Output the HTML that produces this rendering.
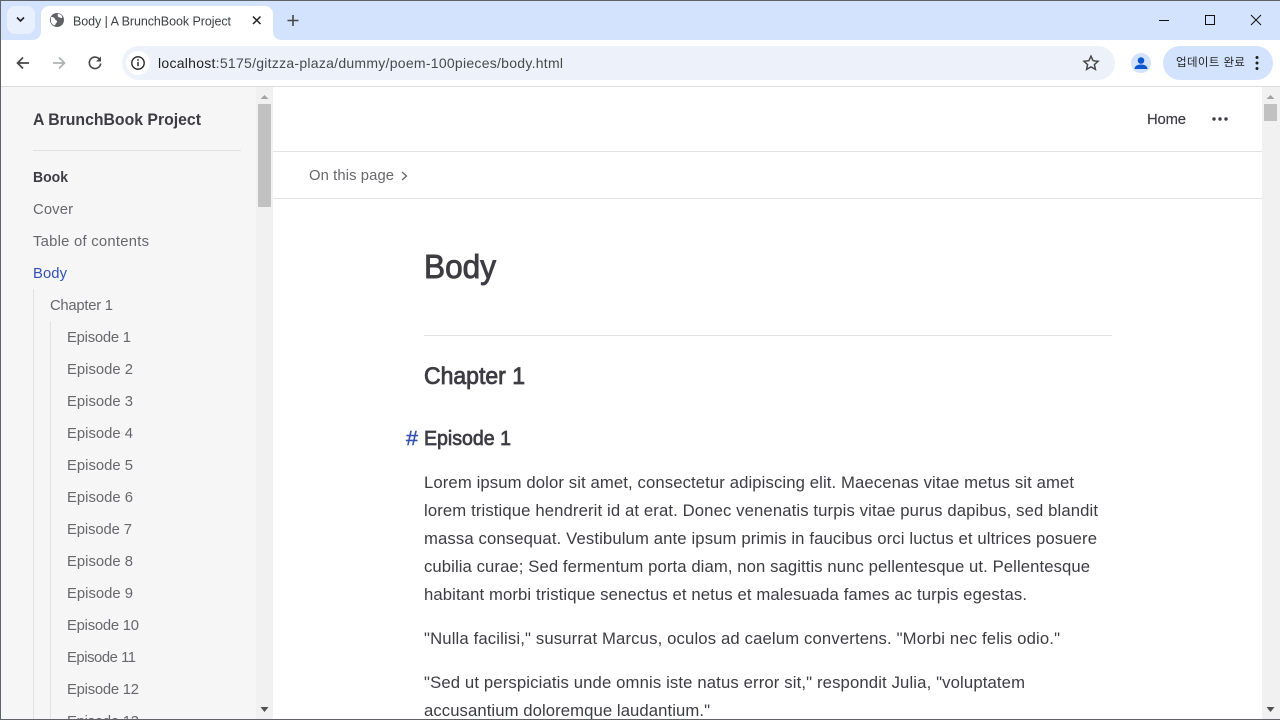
<!DOCTYPE html>
<html lang="en">
<head>
<meta charset="utf-8">
<title>Body | A BrunchBook Project</title>
<style>
html,body{margin:0;padding:0;width:1280px;height:720px;overflow:hidden;background:#fff}
svg{position:absolute;left:0;top:0;display:block}
text{font-family:"Liberation Sans","Noto Sans CJK KR",sans-serif;white-space:pre}
.s{font-size:14.800px;fill:#67676c}
.b{font-size:16.700px;fill:#3c3c43}
</style>
</head>
<body>
<svg width="1280" height="720" viewBox="0 0 1280 720" xmlns="http://www.w3.org/2000/svg">
<defs><clipPath id="c"><rect x="0" y="87" width="1280" height="632"/></clipPath></defs>
<rect width="1280" height="720" fill="#fff"/>
<!-- tab strip -->
<rect width="1280" height="40" fill="#d3e3fd"/>
<rect x="7" y="6" width="28" height="28" rx="8" fill="#e8f0fe"/>
<path d="M17 17.500l3.500 3.500 3.500-3.500" fill="none" stroke="#1f1f1f" stroke-width="1.600"/>
<path d="M33 40a8 8 0 0 0 8-8V14a8 8 0 0 1 8-8h216a8 8 0 0 1 8 8v18a8 8 0 0 0 8 8z" fill="#fff"/>
<circle cx="57" cy="20" r="7" fill="#5f6368"/>
<path d="M51 17c2 0 3.500 .5 4 2s2 1 2 2.500-1.500 1.500-1.500 3l-1 1c-1.500-.5-3-2-3.500-3.500zM58 13.500c1 1 3 .5 3.500 2 .5 1 1 2 .5 2.500-1 0-2.500-.5-3.500-1-1-.5-1-2-.5-3.500z" fill="#fff"/>
<text x="73" y="25.500" font-size="12.500" fill="#3c4043" textLength="158" lengthAdjust="spacing">Body | A BrunchBook Project</text>
<path d="M253 16.500l7.500 7.500M260.500 16.500l-7.500 7.500" stroke="#1f1f1f" stroke-width="1.500" fill="none"/>
<path d="M293 15v11M287.500 20.500h11" stroke="#474747" stroke-width="1.600" fill="none"/>
<path d="M1159 20.500h10" stroke="#111" stroke-width="1"/>
<rect x="1205.500" y="15.500" width="9" height="9" fill="none" stroke="#111" stroke-width="1"/>
<path d="M1251 15l10 10M1261 15l-10 10" stroke="#111" stroke-width="1" fill="none"/>
<!-- toolbar -->
<path d="M0 86V48a8 8 0 0 1 8-8h1264a8 8 0 0 1 8 8v38z" fill="#fff"/>
<path d="M33 40a8 8 0 0 0 8-8h232a8 8 0 0 0 8 8z" fill="#fff"/>
<rect x="0" y="86" width="1280" height="1" fill="#dadce0"/>
<path d="M29 63H18M23 57.500L17.500 63l5.500 5.500" fill="none" stroke="#474747" stroke-width="1.700"/>
<path d="M53 63h11M59 57.500l5.500 5.500-5.500 5.500" fill="none" stroke="#b0b2b5" stroke-width="1.700"/>
<path d="M100 60a5.700 5.700 0 1 0 .7 3.500" fill="none" stroke="#474747" stroke-width="1.600"/>
<path d="M101 56.500v5h-5z" fill="#474747"/>
<rect x="122" y="46" width="993" height="34" rx="17" fill="#edf2fa"/>
<circle cx="138" cy="63" r="12" fill="#fff"/>
<circle cx="138" cy="63" r="6.200" fill="none" stroke="#1f1f1f" stroke-width="1.300"/>
<path d="M138 62v4.200" stroke="#1f1f1f" stroke-width="1.400"/><circle cx="138" cy="60" r=".9" fill="#1f1f1f"/>
<text x="158" y="68" font-size="14" textLength="405" lengthAdjust="spacing"><tspan fill="#1f1f1f">localhost</tspan><tspan fill="#474a4d">:5175/gitzza-plaza/dummy/poem-100pieces/body.html</tspan></text>
<path d="M1091 56.200l2.100 4.500 4.900.6-3.600 3.300 1 4.800-4.400-2.500-4.400 2.500 1-4.800-3.600-3.300 4.900-.6z" fill="none" stroke="#474747" stroke-width="1.500"/>
<circle cx="1141" cy="63" r="10" fill="#d3e3fd"/>
<circle cx="1141" cy="60.500" r="3.300" fill="#0b57d0"/>
<path d="M1134.500 69c0-3 3-4.500 6.500-4.500s6.500 1.500 6.500 4.500z" fill="#0b57d0"/>
<rect x="1163" y="46" width="110" height="34" rx="17" fill="#d3e3fd"/>
<text x="1176" y="66" font-size="11.500" fill="#1f1f1f" textLength="69" lengthAdjust="spacing">업데이트 완료</text>
<circle cx="1257" cy="57.500" r="1.500" fill="#1f1f1f"/><circle cx="1257" cy="63" r="1.500" fill="#1f1f1f"/><circle cx="1257" cy="68.500" r="1.500" fill="#1f1f1f"/>
<!-- page -->
<g clip-path="url(#c)">
<rect x="0" y="87" width="273" height="633" fill="#f6f6f7"/>
<rect x="33" y="150" width="208" height="1" fill="#e2e2e3"/>
<text x="33" y="125" font-size="16.500" font-weight="700" fill="#3c3c43" textLength="168" lengthAdjust="spacingAndGlyphs">A BrunchBook Project</text>
<text x="33" y="182" font-size="14.500" font-weight="700" fill="#3c3c43" textLength="35" lengthAdjust="spacingAndGlyphs">Book</text>
<text x="33" y="214" class="s" textLength="40" lengthAdjust="spacing">Cover</text>
<text x="33" y="246" class="s" textLength="116" lengthAdjust="spacing">Table of contents</text>
<text x="33" y="278" class="s" style="fill:#3451b2" textLength="34" lengthAdjust="spacing">Body</text>
<rect x="33" y="289" width="1" height="431" fill="#e2e2e3"/>
<rect x="50" y="321" width="1" height="399" fill="#e2e2e3"/>
<text x="50" y="310" class="s" textLength="63" lengthAdjust="spacing">Chapter 1</text>
<text x="67" y="342" class="s" textLength="64" lengthAdjust="spacing">Episode 1</text>
<text x="67" y="374" class="s" textLength="66" lengthAdjust="spacing">Episode 2</text>
<text x="67" y="406" class="s" textLength="66" lengthAdjust="spacing">Episode 3</text>
<text x="67" y="438" class="s" textLength="66" lengthAdjust="spacing">Episode 4</text>
<text x="67" y="470" class="s" textLength="66" lengthAdjust="spacing">Episode 5</text>
<text x="67" y="502" class="s" textLength="66" lengthAdjust="spacing">Episode 6</text>
<text x="67" y="534" class="s" textLength="65" lengthAdjust="spacing">Episode 7</text>
<text x="67" y="566" class="s" textLength="66" lengthAdjust="spacing">Episode 8</text>
<text x="67" y="598" class="s" textLength="66" lengthAdjust="spacing">Episode 9</text>
<text x="67" y="630" class="s" textLength="72" lengthAdjust="spacing">Episode 10</text>
<text x="67" y="662" class="s" textLength="69" lengthAdjust="spacing">Episode 11</text>
<text x="67" y="694" class="s" textLength="72" lengthAdjust="spacing">Episode 12</text>
<text x="67" y="726" class="s" textLength="72" lengthAdjust="spacing">Episode 13</text>
<!-- sidebar scrollbar -->
<rect x="256" y="87" width="17" height="633" fill="#f1f1f1"/>
<rect x="258" y="104" width="13" height="103" fill="#c1c1c1"/>
<path d="M260.500 99l4-4 4 4z" fill="#a3a3a3"/>
<path d="M260.500 707l4 5 4-5z" fill="#505050"/>
<!-- top nav -->
<rect x="273" y="151" width="990" height="1" fill="#e2e2e3"/>
<rect x="273" y="198" width="990" height="1" fill="#e2e2e3"/>
<text x="1147" y="124" font-size="14.800" fill="#3c3c43" stroke="#3c3c43" stroke-width=".2" textLength="39" lengthAdjust="spacing">Home</text>
<circle cx="1214" cy="119" r="1.700" fill="#3c3c43"/><circle cx="1220" cy="119" r="1.700" fill="#3c3c43"/><circle cx="1226" cy="119" r="1.700" fill="#3c3c43"/>
<text x="309" y="180" class="s" textLength="85" lengthAdjust="spacing">On this page</text>
<path d="M402 172l4.500 4-4.500 4" fill="none" stroke="#67676c" stroke-width="1.300"/>
<!-- content -->
<text x="424" y="278" font-size="33" fill="#3c3c43" stroke="#3c3c43" stroke-width=".9" textLength="72" lengthAdjust="spacingAndGlyphs">Body</text>
<rect x="424" y="335" width="688" height="1" fill="#e2e2e3"/>
<text x="424" y="384" font-size="24" fill="#3c3c43" stroke="#3c3c43" stroke-width=".8" textLength="101" lengthAdjust="spacingAndGlyphs">Chapter 1</text>
<text x="406" y="445" font-size="20" fill="#3451b2" stroke="#3451b2" stroke-width=".4" textLength="12" lengthAdjust="spacingAndGlyphs">#</text>
<text x="424" y="445" font-size="20" fill="#3c3c43" stroke="#3c3c43" stroke-width=".7" textLength="87" lengthAdjust="spacingAndGlyphs">Episode 1</text>
<text x="424" y="488" class="b" textLength="650" lengthAdjust="spacing">Lorem ipsum dolor sit amet, consectetur adipiscing elit. Maecenas vitae metus sit amet</text>
<text x="424" y="516" class="b" textLength="674" lengthAdjust="spacing">lorem tristique hendrerit id at erat. Donec venenatis turpis vitae purus dapibus, sed blandit</text>
<text x="424" y="544" class="b" textLength="673" lengthAdjust="spacing">massa consequat. Vestibulum ante ipsum primis in faucibus orci luctus et ultrices posuere</text>
<text x="424" y="572" class="b" textLength="666" lengthAdjust="spacing">cubilia curae; Sed fermentum porta diam, non sagittis nunc pellentesque ut. Pellentesque</text>
<text x="424" y="600" class="b" textLength="603" lengthAdjust="spacing">habitant morbi tristique senectus et netus et malesuada fames ac turpis egestas.</text>
<text x="424" y="644" class="b" textLength="636" lengthAdjust="spacing">"Nulla facilisi," susurrat Marcus, oculos ad caelum convertens. "Morbi nec felis odio."</text>
<text x="424" y="688" class="b" textLength="601" lengthAdjust="spacing">"Sed ut perspiciatis unde omnis iste natus error sit," respondit Julia, "voluptatem</text>
<text x="424" y="716" class="b" textLength="286" lengthAdjust="spacing">accusantium doloremque laudantium."</text>
<!-- page scrollbar -->
<rect x="1262" y="87" width="18" height="633" fill="#f1f1f1"/>
<rect x="1264" y="104" width="13" height="17" fill="#c1c1c1"/>
<path d="M1266.500 99l4-4 4 4z" fill="#a3a3a3"/>
<path d="M1266.500 707l4 5 4-5z" fill="#505050"/>
</g>
<!-- window edge -->
<rect x="0" y="0" width="1280" height="1" fill="#5f6368"/>
<rect x="0" y="0" width="1" height="720" fill="#5f6368"/>
<rect x="0" y="719" width="1280" height="1" fill="#5f6368"/>
</svg>
</body>
</html>
